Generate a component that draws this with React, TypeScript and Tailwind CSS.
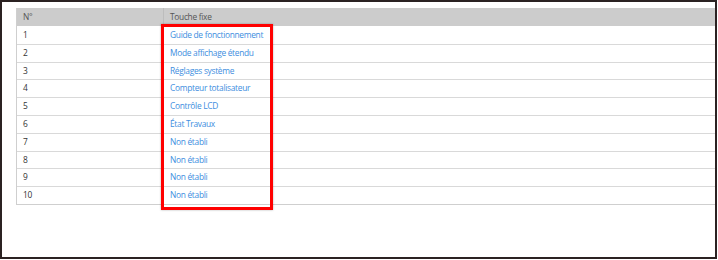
import React from 'react';

const ROWS: { n: number; label: string }[] = [
  { n: 1, label: 'Guide de fonctionnement' },
  { n: 2, label: 'Mode affichage étendu' },
  { n: 3, label: 'Réglages système' },
  { n: 4, label: 'Compteur totalisateur' },
  { n: 5, label: 'Contrôle LCD' },
  { n: 6, label: 'État Travaux' },
  { n: 7, label: 'Non établi' },
  { n: 8, label: 'Non établi' },
  { n: 9, label: 'Non établi' },
  { n: 10, label: 'Non établi' },
];

export default function App() {
  return (
    <div className="w-[718px] h-[260px] bg-white" style={{ fontFamily: '"Open Sans", "Liberation Sans", sans-serif' }}>
      <div className="w-[717px] h-[259px] border-2 border-[#2b2222] bg-white pt-[6px] pl-[14px] relative">
        {/* tableau des touches */}
        <div className="w-[699px] border-l border-b border-[#cfcfcf] text-[8.4px] tracking-[-0.3px]">
          <div className="flex h-[18px] items-center bg-[#cccccc] text-[#555]">
            <div className="w-[147px] pl-[6px] h-full flex items-center border-r border-[#bdbdbd]">N°</div>
            <div className="pl-[6px]">Touche fixe</div>
          </div>
          {ROWS.map((r, i) => (
            <div key={r.n} className={`flex h-[17.8px] items-center ${i > 0 ? 'border-t border-[#d9d9d9]' : ''}`}>
              <div className="w-[147px] pl-[6px] text-[#333]">{r.n}</div>
              <div className="pl-[6px] text-[#3d8ee0]">{r.label}</div>
            </div>
          ))}
        </div>

        {/* cadre rouge de mise en évidence */}
        <div className="absolute left-[159px] top-[22px] w-[112px] h-[186px] border-[3px] border-[#ff0000] shadow-[0_0_2px_rgba(0,0,0,0.3)]" />
      </div>
    </div>
  );
}
